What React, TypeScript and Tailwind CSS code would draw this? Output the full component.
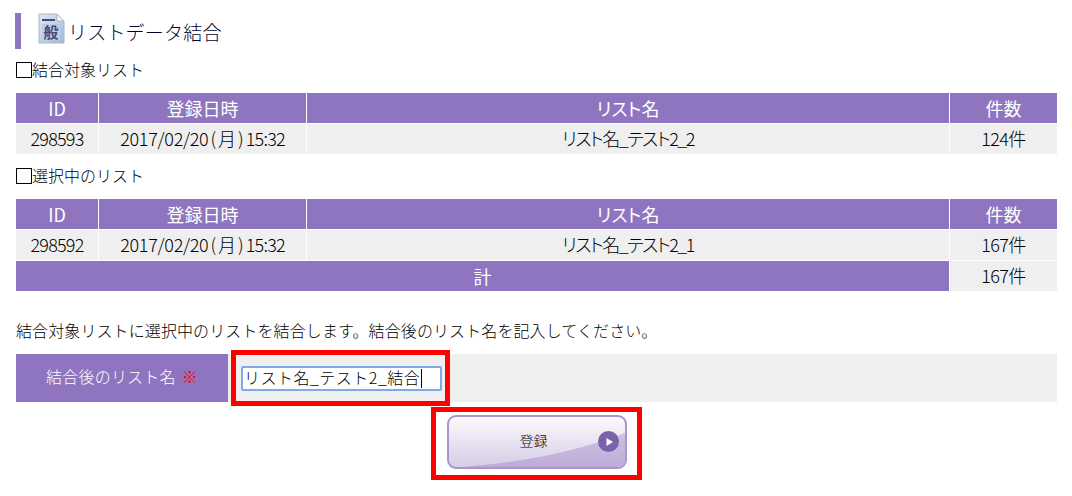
const font = { fontFamily: '"Noto Sans CJK JP", "Liberation Sans", sans-serif' }

interface Row {
  id: string
  name: string
  count: string
}

function ListTable({ row, total }: { row: Row; total?: string }) {
  const th = 'bg-[#8f75c0] text-white font-normal h-[31px] p-0 border border-white text-[18px] font-light [font-feature-settings:"palt"]'
  const td = 'bg-[#efefef] text-black h-[31px] p-0 pb-[3px] border border-white text-[18px] text-center font-light [font-feature-settings:"palt"]'
  return (
    <table className="ml-[15px] w-[1042px] table-fixed border-collapse">
      <colgroup>
        <col className="w-[83px]" />
        <col className="w-[208px]" />
        <col className="w-[643px]" />
        <col className="w-[108px]" />
      </colgroup>
      <thead>
        <tr>
          <th className={th}>ID</th>
          <th className={th}>登録日時</th>
          <th className={th}>リスト名</th>
          <th className={th}>件数</th>
        </tr>
      </thead>
      <tbody>
        <tr>
          <td className={`${td} tracking-[-0.8px]`}>{row.id}</td>
          <td className={td}>
            <span className="tracking-[-0.3px]">2017/02/20</span>
            <span className="tracking-[2px] ml-[2px]">(月)</span>
            <span className="tracking-[-0.8px]">15:32</span>
          </td>
          <td className={`${td} tracking-[-1.5px]`}>{row.name}</td>
          <td className={`${td} tracking-[-0.6px]`}>{row.count}</td>
        </tr>
        {total && (
          <tr>
            <th colSpan={3} className={th}>計</th>
            <td className={`${td} tracking-[-0.6px]`}>{total}</td>
          </tr>
        )}
      </tbody>
    </table>
  )
}

function DocIcon() {
  return (
    <svg width="27" height="31" viewBox="0 0 27 31" className="shrink-0">
      <defs>
        <linearGradient id="doc" x1="0" y1="0" x2="1" y2="1">
          <stop offset="0" stopColor="#dfe8f3" />
          <stop offset="1" stopColor="#9fbcd6" />
        </linearGradient>
      </defs>
      <path d="M1 1H19L26 8V30H1Z" fill="url(#doc)" stroke="#a4b8cc" />
      <path d="M19 1V8H26Z" fill="#f4f7fb" stroke="#a4b8cc" />
      <rect x="4" y="6" width="13" height="2" fill="#4a4580" />
      <rect x="4" y="11" width="18" height="16" fill="#bccfe2" />
      <text x="13" y="25" textAnchor="middle" fontSize="15" fontWeight="700" fill="#4a4580" style={font}>般</text>
    </svg>
  )
}

function SubmitButton() {
  return (
    <button className="relative w-[180px] h-[54px] rounded-[9px] border-2 border-[#a995cd] overflow-hidden bg-gradient-to-b from-[#fbfafd] to-[#d6cde6] text-black">
      <svg className="absolute left-0 top-0" width="176" height="50" viewBox="0 0 176 50">
        <defs>
          <linearGradient id="swoosh" x1="0" y1="0" x2="0" y2="1">
            <stop offset="0" stopColor="#cdc1e2" />
            <stop offset="1" stopColor="#bdacd8" />
          </linearGradient>
        </defs>
        <path d="M14 50C60 46 120 38 176 16V50Z" fill="url(#swoosh)" />
      </svg>
      <span className="relative block pr-[7px] pb-[4px] text-[14px]" style={font}>登録</span>
      <span className="absolute right-[6px] top-[14px] w-[21px] h-[21px] rounded-full bg-[#7a62aa] flex items-center justify-center">
        <svg width="10" height="10" viewBox="0 0 10 10"><path d="M2.5 1L9 5L2.5 9Z" fill="#fff" /></svg>
      </span>
    </button>
  )
}

export default function App() {
  return (
    <div className="relative w-[1072px] h-[496px] bg-white overflow-hidden text-[16px] leading-[20px] text-black font-light" style={font}>
      {/* Heading */}
      <div className="ml-[15px] mt-[13px] h-[36px] border-l-[6px] border-[#8f75c0] pl-[17px] flex items-start gap-[3px]">
        <DocIcon />
        <h1 className="text-[19px] leading-[38px] tracking-[0.2px] text-[#000033] font-light">リストデータ結合</h1>
      </div>

      <p className="ml-[16px] mt-[10px] h-[20px]"><span className="inline-block w-[16px] h-[16px] border border-black align-[-2px]" />結合対象リスト</p>
      <div className="mt-[13px]">
        <ListTable row={{ id: '298593', name: 'リスト名_テスト2_2', count: '124件' }} />
      </div>

      <p className="ml-[16px] mt-[10px] h-[20px]"><span className="inline-block w-[16px] h-[16px] border border-black align-[-2px]" />選択中のリスト</p>
      <div className="mt-[13px]">
        <ListTable row={{ id: '298592', name: 'リスト名_テスト2_1', count: '167件' }} total="167件" />
      </div>

      <p className="ml-[16px] mt-[28px] h-[20px] tracking-[0.1px]">結合対象リストに選択中のリストを結合します。結合後のリスト名を記入してください。</p>

      {/* Name field */}
      <div className="ml-[16px] mt-[14px] w-[1041px] h-[48px] flex bg-[#efefef]">
        <div className="w-[212px] pb-[4px] bg-[#8f75c0] text-white flex items-center justify-center gap-[6px] tracking-[0.2px]">
          <span>結合後のリスト名</span>
          <span className="text-[#ff0000]">※</span>
        </div>
        <div className="relative ml-[13px] mt-[12px]">
          <input
            readOnly
            value="リスト名_テスト2_結合"
            className="w-[201px] h-[25px] bg-white border-2 border-[#7eaae6] rounded-[2px] px-[1px] pb-[3px] text-[16px] tracking-[0.5px] text-black outline-none"
            style={font}
          />
          <span className="absolute left-[180px] top-[3px] w-[1px] h-[19px] bg-black" />
        </div>
      </div>

      {/* Button */}
      <div className="mt-[13px] ml-[447px]">
        <SubmitButton />
      </div>

      {/* Red annotation boxes */}
      <div className="absolute left-[231px] top-[350px] w-[219px] h-[56px] border-[5px] border-[#ff0000] pointer-events-none" />
      <div className="absolute left-[431px] top-[407px] w-[211px] h-[73px] border-[5px] border-[#ff0000] pointer-events-none" />
    </div>
  )
}
